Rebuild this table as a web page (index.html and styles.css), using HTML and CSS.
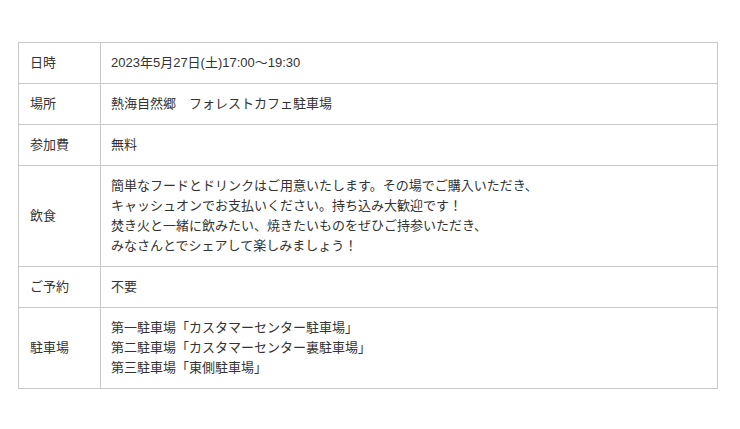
FILE: index.html
```html
<!DOCTYPE html>
<html lang="ja">
<head>
<meta charset="utf-8">
<link rel="stylesheet" href="styles.css">
</head>
<body>
<div class="wrap">
<table class="info">
<tr><th>日時</th><td>2023年5月27日(土)17:00〜19:30</td></tr>
<tr><th>場所</th><td>熱海自然郷　フォレストカフェ駐車場</td></tr>
<tr><th>参加費</th><td>無料</td></tr>
<tr><th>飲食</th><td>簡単なフードとドリンクはご用意いたします。その場でご購入いただき、<br>キャッシュオンでお支払いください。持ち込み大歓迎です！<br>焚き火と一緒に飲みたい、焼きたいものをぜひご持参いただき、<br>みなさんとでシェアして楽しみましょう！</td></tr>
<tr><th>ご予約</th><td>不要</td></tr>
<tr><th>駐車場</th><td>第一駐車場「カスタマーセンター駐車場」<br>第二駐車場「カスタマーセンター裏駐車場」<br>第三駐車場「東側駐車場」</td></tr>
</table>
</div>
</body>
</html>
```
FILE: styles.css
```css
html, body {
  margin: 0;
  padding: 0;
  background: #fff;
}
.wrap {
  padding: 42px 0 0 18px;
}
.info {
  border-collapse: collapse;
  width: 700px;
  font-family: "Liberation Sans", "Noto Sans CJK JP", sans-serif;
  font-size: 13px;
  line-height: 20px;
  color: #333;
}
.info th, .info td {
  border: 1px solid #c8c8c8;
  padding: 10px 10px;
  text-align: left;
  font-weight: normal;
  vertical-align: middle;
}
.info th {
  width: 60px;
  padding-left: 11px;
}
```
